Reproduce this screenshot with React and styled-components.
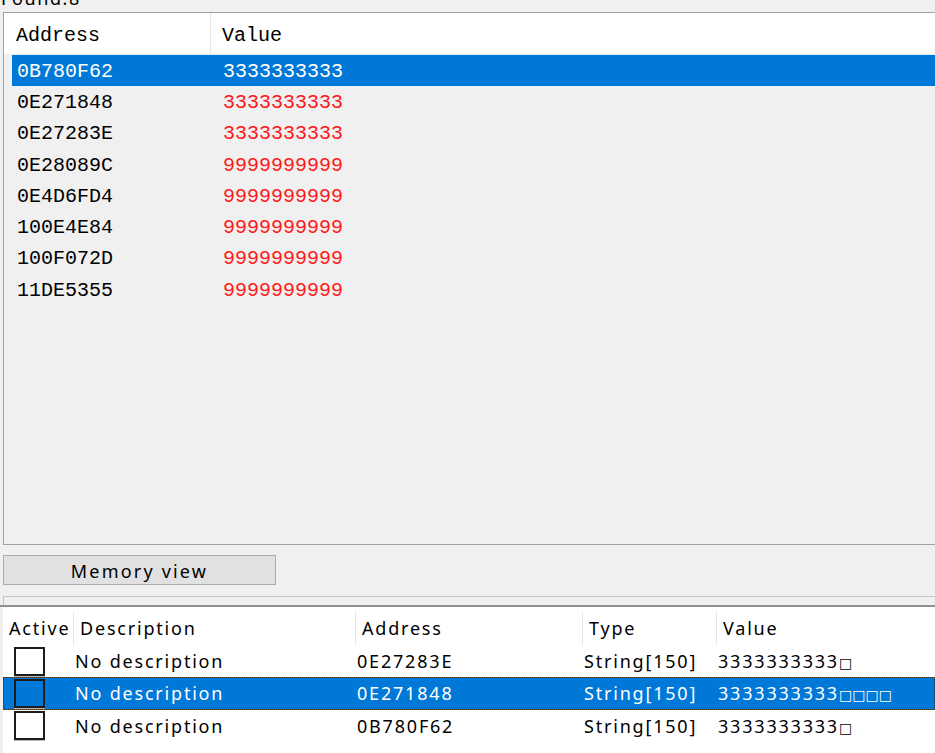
import React from "react";
import styled, { createGlobalStyle, css } from "styled-components";

const Global = createGlobalStyle`
  html, body { margin: 0; padding: 0; background: #f0f0f0; overflow: hidden; }
  body { width: 935px; height: 753px; }
`;

const Page = styled.div`
  width: 935px;
  height: 753px;
  overflow: hidden;
  display: flex;
  flex-direction: column;
  font-family: "Noto Sans", "Noto Sans CJK SC", sans-serif;
  color: #000;
`;

const FoundLabel = styled.div`
  height: 12px;
  overflow: hidden;
  font-size: 18px;
  letter-spacing: 1.6px;
  line-height: 20px;
  & > span { display: block; margin-top: -12px; padding-left: 1px; }
`;

const ResultList = styled.div`
  margin-left: 3px;
  margin-right: -20px;
  height: 531px;
  border: 1px solid #a0a0a0;
  background: #f0f0f0;
  font-family: "Liberation Mono", "Courier New", monospace;
  font-size: 20px;
`;

const ListHeader = styled.div`
  height: 41px;
  background: #fff;
  display: grid;
  grid-template-columns: 206px 1fr;
  border-bottom: 1px solid #e8eef4;
`;

const ListHeadCell = styled.div`
  display: flex;
  align-items: center;
  padding-left: ${(p) => (p.$first ? "12px" : "11px")};
  ${(p) => !p.$first && css`border-left: 1px solid #e5e5e5;`}
  padding-top: 4px;
`;

const ListBody = styled.div`
  padding-left: 8px;
`;

const ResultRow = styled.div`
  height: 31.3px;
  display: grid;
  grid-template-columns: 198px 1fr;
  align-items: center;
  padding-top: 1px;
  box-sizing: border-box;
  background: ${(p) => (p.$selected ? "#0078d7" : "transparent")};
  color: ${(p) => (p.$selected ? "#fff" : "#000")};
`;

const AddrCell = styled.div`
  padding-left: 5px;
`;

const ValueCell = styled.div`
  padding-left: 13px;
  color: ${(p) => (p.$selected ? "#fff" : "#ff1a1a")};
`;

const Actions = styled.div`
  padding: 10px 0 0 3px;
`;

const Button = styled.button`
  width: 273px;
  height: 30px;
  background: #e1e1e1;
  border: 1px solid #adadad;
  margin: 0;
  padding: 1px 0 0 0;
  font-family: "Noto Sans", "Noto Sans CJK SC", sans-serif;
  font-size: 18px;
  letter-spacing: 2.2px;
  color: #000;
  display: flex;
  align-items: center;
  justify-content: center;
`;

const Splitter = styled.div`
  height: 22px;
  padding-top: 11px;
  box-sizing: border-box;
  border-bottom: 2px solid #8f8f8f;
`;

const SplitterBar = styled.div`
  margin-left: 3px;
  height: 9px;
  border-top: 1px solid #c4c4c4;
  border-left: 1px solid #c4c4c4;
  box-sizing: border-box;
`;

const Table = styled.div`
  flex: 1;
  margin-left: 3px;
  background: #fff;
  font-size: 18px;
  letter-spacing: 1.8px;
`;

const cols = "70px 282px 227px 134px 1fr";

const TableHeader = styled.div`
  height: 38px;
  display: grid;
  grid-template-columns: ${cols};
  padding-top: 5px;
  box-sizing: border-box;
`;

const HeadCell = styled.div`
  display: flex;
  align-items: center;
  padding-left: 6px;
  ${(p) => !p.$first && css`border-left: 1px solid #e5e5e5;`}
  padding-bottom: 1px;
`;

const Row = styled.div`
  height: 32.3px;
  box-sizing: border-box;
  display: grid;
  grid-template-columns: ${cols};
  align-items: center;
  background: ${(p) => (p.$selected ? "#0078d7" : "#fff")};
  color: ${(p) => (p.$selected ? "#fff" : "#000")};
  border: 1px dotted ${(p) => (p.$selected ? "#3a2a10" : "transparent")};
`;

const Cell = styled.div`
  padding-left: 1px;
  white-space: nowrap;
`;

const CheckCell = styled.div`
  padding-left: 10px;
  display: flex;
  align-items: center;
`;

const Checkbox = styled.span`
  width: 31px;
  height: 29px;
  box-sizing: border-box;
  border: 2px solid #1c1c1c;
  background: ${(p) => (p.$selected ? "transparent" : "#fff")};
  box-shadow: 0 1px 0 #b8b8b8;
`;

const Tofu = styled.span`
  font-family: "DejaVu Sans", sans-serif;
  font-size: 14px;
  letter-spacing: 0px;
`;

const results = [
  ["0B780F62", "3333333333"],
  ["0E271848", "3333333333"],
  ["0E27283E", "3333333333"],
  ["0E28089C", "9999999999"],
  ["0E4D6FD4", "9999999999"],
  ["100E4E84", "9999999999"],
  ["100F072D", "9999999999"],
  ["11DE5355", "9999999999"],
];

const entries = [
  { addr: "0E27283E", tofu: 1 },
  { addr: "0E271848", tofu: 4, selected: true },
  { addr: "0B780F62", tofu: 1 },
];

export default function App() {
  return (
    <Page>
      <Global />
      <FoundLabel>
        <span>Found:8</span>
      </FoundLabel>
      <ResultList>
        <ListHeader>
          <ListHeadCell $first>Address</ListHeadCell>
          <ListHeadCell>Value</ListHeadCell>
        </ListHeader>
        <ListBody>
          {results.map(([a, v], i) => (
            <ResultRow key={a} $selected={i === 0}>
              <AddrCell>{a}</AddrCell>
              <ValueCell $selected={i === 0}>{v}</ValueCell>
            </ResultRow>
          ))}
        </ListBody>
      </ResultList>
      <Actions>
        <Button>Memory view</Button>
      </Actions>
      <Splitter>
        <SplitterBar />
      </Splitter>
      <Table>
        <TableHeader>
          <HeadCell $first>Active</HeadCell>
          <HeadCell>Description</HeadCell>
          <HeadCell>Address</HeadCell>
          <HeadCell>Type</HeadCell>
          <HeadCell>Value</HeadCell>
        </TableHeader>
        {entries.map((e) => (
          <Row key={e.addr} $selected={e.selected}>
            <CheckCell>
              <Checkbox $selected={e.selected} />
            </CheckCell>
            <Cell>No description</Cell>
            <Cell>{e.addr}</Cell>
            <Cell>String[150]</Cell>
            <Cell>
              3333333333<Tofu>{"□".repeat(e.tofu)}</Tofu>
            </Cell>
          </Row>
        ))}
      </Table>
    </Page>
  );
}
